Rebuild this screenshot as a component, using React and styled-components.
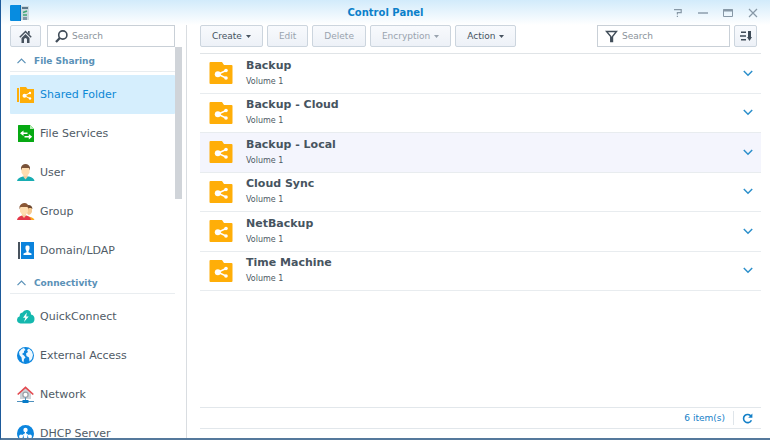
import React from "react";
import styled, { createGlobalStyle } from "styled-components";

const GlobalStyle = createGlobalStyle`
  *, *::before, *::after { box-sizing: border-box; }
  body { margin: 0; background: #fff; }
  body, button, input { font-family: "DejaVu Sans", Verdana, sans-serif; }
  button { padding: 0; margin: 0; cursor: pointer; }
  ul { list-style: none; margin: 0; padding: 0; }
  h1, h2, h3, p { margin: 0; }
  svg { display: block; flex: none; }
`;

const Window = styled.div`
  display: flex;
  flex-direction: column;
  height: 100vh;
  overflow: hidden;
  color: #4b5761;
  background: linear-gradient(#d2ebfb, #fff 25px);
  border-left: 1px solid #1d5a9b;
  border-bottom: 2px solid #55799c;
`;

const TitleBar = styled.header`
  display: grid;
  grid-template-columns: 1fr auto 1fr;
  align-items: center;
  flex: none;
  height: 25px;
  padding: 0 9px;
`;

const Title = styled.h1`
  font-size: 10px;
  line-height: 14px;
  font-weight: 700;
  color: #0b80ca;
`;

const WindowControls = styled.div`
  display: flex;
  justify-content: flex-end;
  gap: 15px;
  padding-right: 3px;
`;

const PlainButton = styled.button`
  display: flex;
  border: 0;
  background: none;
  color: ${(p) => p.$color};
`;

const Body = styled.div`
  display: flex;
  flex: 1;
  min-height: 0;
`;

const Sidebar = styled.aside`
  display: flex;
  flex-direction: column;
  flex: none;
  width: 186px;
  border-right: 1px solid #d9dde1;
`;

const SidebarTools = styled.div`
  display: flex;
  gap: 6px;
  flex: none;
  padding: 0 11px 0 9px;
`;

const ToolButton = styled.button`
  display: flex;
  align-items: center;
  justify-content: center;
  flex: none;
  gap: 4px;
  height: 22px;
  width: ${(p) => p.$width};
  padding: ${(p) => (p.$width ? "0" : "0 11px")};
  font-size: 9px;
  line-height: 12px;
  color: #46535f;
  background: linear-gradient(#f8fafd, #edf1f7);
  border: 1px solid #ccd5de;
  border-radius: 2px;

  &:disabled { color: #99a3ae; cursor: default; }
`;

const SearchField = styled.label`
  display: flex;
  align-items: center;
  gap: 4px;
  height: 22px;
  min-width: 0;
  padding-left: 7px;
  flex: ${(p) => (p.$width ? "none" : "1")};
  width: ${(p) => p.$width};
  background: #fff;
  border: 1px solid #c9d0d7;
  color: #414d59;
`;

const SearchInput = styled.input.attrs({ type: "text", placeholder: "Search" })`
  flex: 1;
  min-width: 0;
  padding: 0;
  border: 0;
  outline: 0;
  font-size: 9px;
  line-height: 12px;
  background: none;
  color: #46535f;

  &::placeholder { color: #8b939b; opacity: 1; }
`;

const NavArea = styled.div`
  display: flex;
  flex: 1;
  min-height: 0;
  padding: 0 4px 0 9px;
`;

const Nav = styled.nav`
  flex: 1;
  min-width: 0;
  overflow: hidden;
  padding-top: 2px;
`;

const ScrollThumb = styled.div`
  flex: none;
  width: 7px;
  height: 152px;
  background: #d0d4d9;
`;

const Group = styled.section`
  margin-bottom: 1px;
`;

const GroupHeader = styled.button`
  display: flex;
  align-items: center;
  gap: 8px;
  width: 100%;
  height: 23px;
  padding: 1px 7px 0;
  margin-bottom: 3px;
  border: 0;
  border-bottom: 1px solid #e9edf0;
  background: none;
  font-size: 9px;
  line-height: 12px;
  font-weight: 700;
  color: #5a91b7;
`;

const NavLink = styled.a`
  display: flex;
  align-items: center;
  gap: 5px;
  height: 39px;
  padding-left: 7px;
  border-radius: 1px;
  font-size: 11px;
  line-height: 16px;
  text-decoration: none;
  white-space: nowrap;
  color: ${(p) => (p.$active ? "#0d88d5" : "#505b66")};
  background: ${(p) => (p.$active ? "#d5eefd" : "none")};
`;

const Main = styled.main`
  display: flex;
  flex-direction: column;
  flex: 1;
  min-width: 0;
  padding: 0 9px 9px 13px;
`;

const Toolbar = styled.div`
  display: flex;
  align-items: center;
  gap: 4px;
  flex: none;
  height: 29px;
  padding: 0 4px 6px 0;
  border-bottom: 1px solid #e0e4e7;
`;

const Spacer = styled.div`
  flex: 1;
`;

const FolderList = styled.ul`
  display: grid;
  grid-auto-rows: 1fr;
  min-height: 237px;
`;

const FolderRow = styled.li`
  display: flex;
  align-items: center;
  gap: 13px;
  padding: 0 8px 0 9px;
  border-bottom: 1px solid #e8ecef;
  background: ${(p) => (p.$hover ? "#f4f5fd" : "none")};
`;

const FolderText = styled.div`
  flex: 1;
  min-width: 0;
`;

const FolderName = styled.h3`
  font-size: 11px;
  line-height: 17px;
  font-weight: 700;
  color: #47545f;
`;

const FolderPlace = styled.p`
  font-size: 8px;
  line-height: 16px;
  color: #4d5963;
`;

const StatusBar = styled.footer`
  display: flex;
  align-items: center;
  justify-content: flex-end;
  gap: 8px;
  flex: none;
  height: 22px;
  margin-top: auto;
  padding-right: 8px;
  border: solid #e2e7eb;
  border-width: 1px 0;
  font-size: 9px;
  line-height: 12px;
  color: #1480c8;
`;

const Separator = styled.span`
  width: 1px;
  height: 14px;
  background: #dfe5ea;
`;

const AppIcon = () => (
  <svg width="19" height="16" viewBox="0 0 19 16">
    <rect x="11" y="1" width="8" height="14" fill="#cbd9df" />
    <rect x="12" y="2" width="6" height="2" fill="#5c778a" />
    <path d="M13 7.5l4-1.500M13 10h4" stroke="#3fa676" strokeWidth="1.5" />
    <rect x="13" y="12" width="4" height="3" fill="#8297a5" />
    <rect width="11" height="16" rx="1" fill="#078ce0" />
    <path d="M10 0h1v16h-1z" fill="#0870b9" />
  </svg>
);

const HomeIcon = () => (
  <svg width="13" height="13" viewBox="0 0 13 13" fill="none" stroke="#47525e">
    <path d="M.8 7.200L6.500 1.500l5.700 5.700" strokeWidth="1.5" />
    <path d="M2.500 8l4-4 4 4v5H8V9.500Q8 8 6.500 8T5 9.500V13H2.500z" fill="#47525e" stroke="none" />
    <path d="M9 1h1.700v3.800L9 3.200z" fill="#47525e" stroke="none" />
  </svg>
);

const SearchIcon = () => (
  <svg width="13" height="13" viewBox="0 0 13 13" fill="none" stroke="currentColor">
    <circle cx="7.8" cy="5" r="4.1" strokeWidth="1.6" />
    <path d="M4.8 8L1 12" strokeWidth="2.3" />
  </svg>
);

const FilterIcon = () => (
  <svg width="13" height="13" viewBox="0 0 13 13" fill="none" stroke="currentColor">
    <path d="M1.500 1.500h10L7.500 6.500v5H5.800v-5z" strokeWidth="1.4" />
    <path d="M6.600 7v5" strokeWidth="2" />
  </svg>
);

const SortIcon = () => (
  <svg width="12" height="10" viewBox="0 0 12 10" fill="#3e4b57">
    <path d="M1 .5h5V2H1zM0 4.200h6v1.500H0zM1 8h5v1.500H1zM8 0h3v6h1L9.500 10 7 6h1z" />
  </svg>
);

const Caret = () => (
  <svg width="5" height="3" viewBox="0 0 5 3" fill="currentColor">
    <path d="M0 0h5L2.500 3z" />
  </svg>
);

const ChevronUp = () => (
  <svg width="9" height="6" viewBox="0 0 9 6" fill="none" stroke="currentColor">
    <path d="M.5 5.200l4-4 4 4" strokeWidth="1.2" />
  </svg>
);

const ChevronDown = () => (
  <svg width="10" height="7" viewBox="0 0 10 7" fill="none" stroke="currentColor">
    <path d="M.8 1l4.200 4.200L9.200 1" strokeWidth="1.5" />
  </svg>
);

const RefreshIcon = () => (
  <svg width="11" height="11" viewBox="0 0 11 11" fill="none" stroke="currentColor">
    <path d="M9 3.200A4.100 4.100 0 1 0 9.400 7.200" strokeWidth="1.6" />
    <path d="M10.400.6v4.200H6.200z" fill="currentColor" stroke="none" />
  </svg>
);

const HelpIcon = () => (
  <svg width="10" height="10" viewBox="0 0 10 10" fill="none" stroke="currentColor" strokeWidth="1.2">
    <path d="M1 1.600h7.200v3H4.400v2M4.400 7.700v1.200" />
  </svg>
);

const MinimizeIcon = () => (
  <svg width="10" height="10" viewBox="0 0 10 10" stroke="currentColor">
    <path d="M0 5h10" strokeWidth="1.4" />
  </svg>
);

const MaximizeIcon = () => (
  <svg width="10" height="10" viewBox="0 0 10 10" fill="none" stroke="currentColor">
    <path d="M.5 1.500h9v7h-9z" />
    <path d="M0 2.500h10" strokeWidth="2" />
  </svg>
);

const CloseIcon = () => (
  <svg width="10" height="10" viewBox="0 0 10 10" stroke="currentColor" strokeWidth="1.2">
    <path d="M1 1l8 8M9 1L1 9" />
  </svg>
);

const FolderIcon = () => (
  <svg width="24" height="24" viewBox="0 0 24 24">
    <path d="M1.500 1H13l2 3h7.500q1 0 1 1v17q0 1-1 1h-21q-1 0-1-1V2q0-1 1-1z" fill="#ffae08" />
    <path d="M17 9.500L9 13.300l8 3.700" fill="none" stroke="#fff" strokeWidth="1.5" />
    <circle cx="8.800" cy="13.300" r="3" fill="#fff" />
    <circle cx="17" cy="9.500" r="1.800" fill="#fff" />
    <circle cx="17" cy="17" r="1.800" fill="#fff" />
  </svg>
);

const NAV_ART = {
  shared: (
    <>
      <path d="M0 2h2v14H0zM3 1h6l1.500 2H17v14H3z" fill="#ffae08" />
      <path d="M13 6.800L7.500 9.800l5.500 2.700" fill="none" stroke="#fff" />
      <circle cx="7.500" cy="9.800" r="2" fill="#fff" />
      <circle cx="13" cy="7" r="1.200" fill="#fff" />
      <circle cx="13" cy="12.500" r="1.200" fill="#fff" />
    </>
  ),
  services: (
    <>
      <path d="M1.500 0H13l4 4v12.500q0 .5-.5.500h-15q-.5 0-.5-.5V.5q0-.5.5-.5z" fill="#06a913" />
      <path d="M13 0l4 4h-4z" fill="#b5edb4" />
      <path d="M4 8.300h6.500M7.500 11.800H14" stroke="#fff" strokeWidth="1.400" />
      <path d="M6.500 5.500L3 8.300l3.500 2.800zM11.800 9l3.400 2.800-3.400 2.800z" fill="#fff" />
    </>
  ),
  user: (
    <>
      <path d="M0 17q.5-3.500 6-4.500h6q5 1 5.500 4.500z" fill="#18adb2" />
      <path d="M6.500 10h4v3l-2 2.500-2-2.500z" fill="#f5ce9d" />
      <path d="M4.500 4h8v4.500q-1.500 3.500-4 3.500t-4-3.500z" fill="#ffddb0" />
      <path d="M4 6.500V3.500Q5 0 8.500 0T13 3.500v3L12 4H5z" fill="#795238" />
    </>
  ),
  group: (
    <>
      <path d="M10 17v-3.500q6 0 7.500 3.500z" fill="#fba81f" />
      <path d="M10 4h5v5q-1.500 3-3 3t-2-2z" fill="#f6c991" />
      <path d="M8.500 4q1-2 3-2 3.500 0 4 4l-1.500-1h-5z" fill="#6e4931" />
      <path d="M0 17q.5-3.500 5-4.500h4.500q4 1 4.500 4.500z" fill="#e43748" />
      <path d="M5 10h4v2.500L7 15l-2-2.500z" fill="#f5ce9d" />
      <path d="M3 4h8v4.500q-1.500 3.500-4 3.500T3 8.500z" fill="#ffddb0" />
      <path d="M2.500 6.500V3.500Q4 0 7.500 0t4 4v2.500l-1-2.500h-7z" fill="#8b5735" />
    </>
  ),
  domain: (
    <>
      <path d="M1 0h2v17H1z" fill="#48535e" />
      <path d="M4 0h13v17H4z" fill="#0b83dc" />
      <path d="M6.500 13v-1.500l3-1.200v-1L8.500 7V4.500l1-1h2l1 1V7l-1 2.300v1l3 1.200V13z" fill="#fff" />
    </>
  ),
  quick: (
    <>
      <path d="M3.500 15.500Q0 15 0 11.800 0 9 2.700 8.200 2.500 5 5.500 4.600 7 1.500 10.500 2q3.500.7 3.500 4.500 3.500.5 3.500 4.500t-4 4.500z" fill="#14b8ae" />
      <path d="M9.800 4.500L6 9.800h2.400L7 14l4.700-5.500H9.200z" fill="#fff" />
    </>
  ),
  external: (
    <>
      <circle cx="8.500" cy="8.500" r="8.500" fill="#0c86df" />
      <path d="M2 5l2.500-3L7 1l1.500 2L7 4v1.500L5 7l2 1.500 1.500 2L7 12l-.5 3.500L5 14l-.5-3.500L2.500 8zM10 3l2-1.500 3 3L16 8l-1 4-2.500 2.500-.5-4L9.500 9 9 6.500 11 5z" fill="#edf8ff" />
    </>
  ),
  network: (
    <>
      <path d="M3 7l5.500-5L14 7v6H3z" fill="#cdd3d8" />
      <path d="M.7 8.500L8.500 1.300l7.800 7.200" fill="none" stroke="#e34a50" strokeWidth="1.700" />
      <circle cx="8.500" cy="8.800" r="2.600" fill="#fff" stroke="#9ca4ab" strokeWidth="1.300" />
      <path d="M8.500 11.500v3M0 15.500h17" stroke="#4e90bd" />
      <path d="M5.500 14h6v3h-6z" fill="#087cc9" />
    </>
  ),
  dhcp: (
    <>
      <circle cx="8.500" cy="8.500" r="8.500" fill="#0c86df" />
      <path d="M8.500 6v4M3.500 12l5-3.500 5 3.500" fill="none" stroke="#fff" strokeWidth="1.200" />
      <circle cx="8.500" cy="5" r="2.200" fill="#fff" />
      <circle cx="4" cy="11.500" r="1.900" fill="#fff" />
      <circle cx="8.500" cy="11.500" r="1.900" fill="#fff" />
      <circle cx="13" cy="11.500" r="1.900" fill="#fff" />
    </>
  ),
};

const NavIcon = ({ name }) => (
  <svg width="18" height="17" viewBox="0 0 18 17" aria-hidden="true">
    {NAV_ART[name]}
  </svg>
);

const GROUPS = [
  {
    title: "File Sharing",
    items: [
      ["shared", "Shared Folder"],
      ["services", "File Services"],
      ["user", "User"],
      ["group", "Group"],
      ["domain", "Domain/LDAP"],
    ],
  },
  {
    title: "Connectivity",
    items: [
      ["quick", "QuickConnect"],
      ["external", "External Access"],
      ["network", "Network"],
      ["dhcp", "DHCP Server"],
    ],
  },
];

const ACTIONS = [
  { label: "Create", menu: true },
  { label: "Edit", disabled: true },
  { label: "Delete", disabled: true },
  { label: "Encryption", menu: true, disabled: true },
  { label: "Action", menu: true },
];

const FOLDERS = ["Backup", "Backup - Cloud", "Backup - Local", "Cloud Sync", "NetBackup", "Time Machine"];

const CONTROLS = [
  ["Help", HelpIcon],
  ["Minimize", MinimizeIcon],
  ["Maximize", MaximizeIcon],
  ["Close", CloseIcon],
];

export default function App() {
  return (
    <>
      <GlobalStyle />
      <Window>
        <TitleBar>
          <AppIcon />
          <Title>Control Panel</Title>
          <WindowControls>
            {CONTROLS.map(([label, Icon]) => (
              <PlainButton key={label} $color="#8798a6" aria-label={label}>
                <Icon />
              </PlainButton>
            ))}
          </WindowControls>
        </TitleBar>
        <Body>
          <Sidebar>
            <SidebarTools>
              <ToolButton $width="31px" aria-label="Home">
                <HomeIcon />
              </ToolButton>
              <SearchField>
                <SearchIcon />
                <SearchInput aria-label="Search settings" />
              </SearchField>
            </SidebarTools>
            <NavArea>
              <Nav>
                {GROUPS.map((group) => (
                  <Group key={group.title}>
                    <GroupHeader aria-expanded="true">
                      <ChevronUp />
                      {group.title}
                    </GroupHeader>
                    <ul>
                      {group.items.map(([icon, label]) => (
                        <li key={label}>
                          <NavLink href="#" $active={icon === "shared"}>
                            <NavIcon name={icon} />
                            {label}
                          </NavLink>
                        </li>
                      ))}
                    </ul>
                  </Group>
                ))}
              </Nav>
              <ScrollThumb />
            </NavArea>
          </Sidebar>
          <Main>
            <Toolbar>
              {ACTIONS.map((action) => (
                <ToolButton key={action.label} disabled={action.disabled}>
                  {action.label}
                  {action.menu && <Caret />}
                </ToolButton>
              ))}
              <Spacer />
              <SearchField $width="133px">
                <FilterIcon />
                <SearchInput aria-label="Filter folders" />
              </SearchField>
              <ToolButton $width="23px" aria-label="Sort">
                <SortIcon />
              </ToolButton>
            </Toolbar>
            <FolderList>
              {FOLDERS.map((name) => (
                <FolderRow key={name} $hover={name === "Backup - Local"}>
                  <FolderIcon />
                  <FolderText>
                    <FolderName>{name}</FolderName>
                    <FolderPlace>Volume 1</FolderPlace>
                  </FolderText>
                  <PlainButton $color="#2b8fcb" aria-label={`Show details of ${name}`}>
                    <ChevronDown />
                  </PlainButton>
                </FolderRow>
              ))}
            </FolderList>
            <StatusBar>
              <span>6 item(s)</span>
              <Separator />
              <PlainButton $color="#1480c8" aria-label="Refresh">
                <RefreshIcon />
              </PlainButton>
            </StatusBar>
          </Main>
        </Body>
      </Window>
    </>
  );
}
